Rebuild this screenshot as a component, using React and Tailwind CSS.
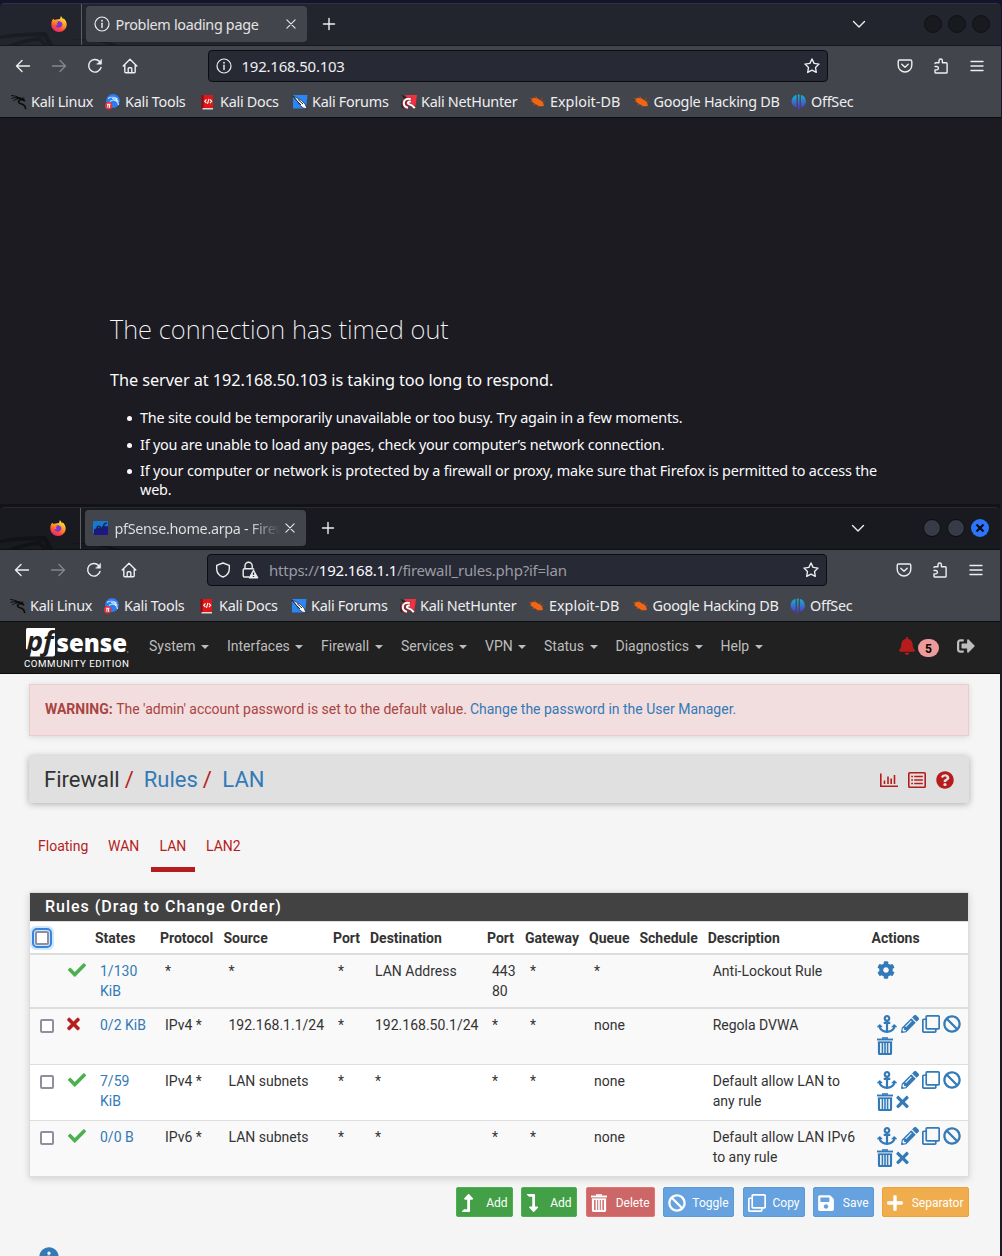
import React from "react";
import { FaAnchor, FaPencilAlt, FaRegClone, FaBan, FaTimes, FaCog, FaCheck, FaBell, FaSignOutAlt, FaLevelUpAlt, FaLevelDownAlt, FaSave, FaPlus, FaQuestionCircle, FaInfoCircle } from "react-icons/fa";

function Firefox() {
  return (
    <svg viewBox="0 0 16 16" className="h-4 w-4 shrink-0">
      <defs>
        <linearGradient id="fx" x1="0.8" y1="0" x2="0.3" y2="1">
          <stop offset="0" stopColor="#fff04a" />
          <stop offset="0.45" stopColor="#ff9a1f" />
          <stop offset="0.75" stopColor="#ff4a3d" />
          <stop offset="1" stopColor="#e3247b" />
        </linearGradient>
      </defs>
      <path d="M1.6 3.6 2.8 2.8 3.2 4l2.3-.4L9 3 9.8.2c1 .7 1.7 1.8 2 2.8l1-.5c1.8 1.6 2.9 3.700 2.900 6C15.700 12.800 12.200 16 8 16S.3 12.700.3 8.500c0-1.900.5-3.600 1.300-4.900z" fill="url(#fx)" />
      <path d="M5 5.700c2.200-1 5-.7 6 1.300 1 2.200-.5 4.800-3.200 4.800C5.700 11.800 4.500 10.300 4.500 9c1 .5 1.600.4 2.300 0-.9-.4-1.300-1.100-1-1.700.4-.6-.2-1-.8-1.600z" fill="#7a35d8" />
      <path d="M3.600 5.300c1.500-.6 2.900 0 4 .9-1.300.2-1.900.8-1.800 1.500-1.200-.3-1.900-1.200-2.200-2.400z" fill="#ff8a16" />
    </svg>
  );
}

const stroke = { fill: "none", stroke: "currentColor", strokeWidth: 1.4, strokeLinecap: "round", strokeLinejoin: "round" };

function Line({ d, className = "", children }) {
  return (
    <svg viewBox="0 0 16 16" className={"h-4 w-4 shrink-0 " + className} {...stroke}>
      {d && <path d={d} />}
      {children}
    </svg>
  );
}

const Back = () => <Line d="M1.500 8h13M7 2.500 1.500 8 7 13.500" />;
const Forward = () => <Line className="text-[#85868b]" d="M1.500 8h13M9 2.500 14.500 8 9 13.500" />;
const Reload = () => (
  <Line d="M14 9.500A6.300 6.300 0 1 1 12.600 3.500">
    <path d="M14.600 1.500v4.700H9.900z" fill="currentColor" strokeWidth="0.500" />
  </Line>
);
const Home = () => (
  <Line className="-ml-px" d="M1.200 8 8 1.300 14.800 8M2.800 6.800v7c0 .6.400 1 1 1h8.400c.6 0 1-.4 1-1v-7">
    <path d="M6.200 14.500v-4c0-.5.300-.8.800-.8h2c.5 0 .8.300.8.800v4" />
  </Line>
);
const Info = () => (
  <Line>
    <circle cx="8" cy="8" r="7" strokeWidth="1.200" />
    <path d="M8 7.300v4.200" />
    <path d="M8 4.600v.2" strokeWidth="1.700" />
  </Line>
);
const Star = () => <Line d="M8 1l2.100 4.400 4.900.7-3.500 3.400.8 4.900L8 12.100l-4.300 2.300.8-4.900L1 6.100l4.900-.7z" />;
const Pocket = () => (
  <Line d="M2.600 2h10.800c.8 0 1.400.6 1.400 1.400v3.800a6.800 6.800 0 0 1-13.600 0V3.400C1.200 2.600 1.800 2 2.600 2z">
    <path d="M4.800 6.300 8 9.300l3.200-3" />
  </Line>
);
const Puzzle = () => (
  <Line d="M2 5.500C2 5 2.300 4.700 2.800 4.700H6V2.700a1.700 1.700 0 0 1 3.400 0v2h3.900c.5 0 .8.300.8.800v8.700c0 .5-.3.800-.8.800H2.800c-.5 0-.8-.3-.8-.8v-2.300h1.700a1.700 1.700 0 0 0 0-3.400H2" />
);
const Menu = () => <Line d="M2 3.500h12M2 8h12M2 12.500h12" />;
const Chevron = () => <Line d="M2.500 5.500 8 11l5.500-5.500" />;
const Plus = () => <Line d="M8 2.500v11M2.500 8h11" />;
const Close = () => <Line className="!h-3 !w-3" d="M2.500 2.500l11 11M13.500 2.500l-11 11" />;

function Dragon() {
  return (
    <svg viewBox="0 0 16 16" className="h-4 w-4 shrink-0" fill="none" stroke="#0c0c0e" strokeLinecap="round">
      <path d="M.5 1.500c3 .2 5.500 1 7.800 2.500M.8 4.300C3 3.600 5 3.500 7 4M2.500 6.800c1.500-1 2.500-1.500 4-1.700" strokeWidth="1" />
      <path d="M6 3.600c3.500.6 6 1.200 8 3.400-2.500-1.500-6-2-6.500.5-.3 2 2.500 2.200 4.500 3 1.600.7 2.400 2 2.600 4" strokeWidth="1.700" />
      <path d="M10 4.500l3-.5" strokeWidth="1" />
    </svg>
  );
}
function Tools() {
  return (
    <svg viewBox="0 0 16 16" className="h-4 w-4 shrink-0">
      <circle cx="8" cy="7" r="6.900" fill="#2b7df0" />
      <path d="M3 4.500c3-2 7-1.500 9.500.5M5 7.500c3.500-3 8-1 8.500 3.500M7 4.500c3 0 5 1 6.500 3" fill="none" stroke="#cfe4ff" strokeWidth="1.100" />
      <circle cx="3.700" cy="11.700" r="3.700" fill="#e5343c" />
      <path d="M2 10.300h3.400M2.900 10.300v3.500M4.600 10.300v3.500" stroke="#fff" fill="none" />
    </svg>
  );
}
function Docs() {
  return (
    <svg viewBox="0 0 16 16" className="h-4 w-4 shrink-0">
      <path d="M1.500 1H13v14H1.500z" fill="#e01717" />
      <path d="M1.500 1h2v14h-2z" fill="#7c1118" />
      <path d="M2.500 14H13v1.500H2.500z" fill="#d8d8dc" />
      <path d="M6.500 5.500 4.700 7.300l1.800 1.800M9.900 5.500l1.800 1.800-1.800 1.800M8.900 4.800 7.500 9.800" stroke="#fff" fill="none" strokeWidth="1.100" />
    </svg>
  );
}
function Forums() {
  return (
    <svg viewBox="0 0 16 16" className="h-4 w-4 shrink-0">
      <path d="M1 1h14.500l-1.500 13.500H1z" fill="#2a86f2" />
      <path d="M0 1.500 5 4l4.500 2.500L13 10l2 4.800-3.500-.8-4-3-2-3.500z" fill="#fff" stroke="#16233c" strokeWidth=".7" />
      <path d="M1 2l4.500 5.500L9 11M6 5.500l5 4.500" stroke="#16233c" fill="none" strokeWidth="1" />
    </svg>
  );
}
function NetHunter() {
  return (
    <svg viewBox="0 0 16 16" className="h-4 w-4 shrink-0">
      <path d="M4 1h12l-1.500 10.500L12.500 13z" fill="#f0313f" />
      <path d="M0 .5l6 3-2.500 1.500zM.5 5v8l2 2" fill="#202024" />
      <path d="M10.500 5C6 3.500 2.500 5.500 2.300 9c0 2.500 2 5 5 5M9.500 8c-2-1-3.500 0-3.300 1.200s2 1.500 3.500 1.800c2 .4 3.500 1.500 4.300 3.200" stroke="#b3202f" strokeWidth="2.800" fill="none" />
      <path d="M9.800 5C5.500 4 2.800 6 2.800 9S4.500 13.300 7 13.700M9.800 7.800C7.500 7 6 8.700 7.500 9.900c2.500.7 4.500 1.700 6.300 4.200" stroke="#fff" strokeWidth="2" fill="none" />
    </svg>
  );
}
function Bug() {
  return (
    <svg viewBox="0 0 16 16" className="h-4 w-4 shrink-0">
      <path d="M0 4.500l5-.5M.5 7.500h4M3 11l3-1M12.500 3.500l-2 3M14.500 7.500l-3 .5M8 13.500l2-2M14 11.500l-2-1M5.500 2l2 3" stroke="#a14d1c" strokeWidth=".9" />
      <path d="M1.500 5.200C3.500 3.500 7 3.700 9.500 5.700c2.900 1 4.500 3.700 4.200 6.200-2.500 1-5.700.3-7.700-1.700-2.500-.5-4.200-2.500-4.500-5z" fill="#f26514" />
    </svg>
  );
}
function OffSec() {
  return (
    <svg viewBox="0 0 16 16" className="h-4 w-4 shrink-0">
      <defs>
        <linearGradient id="os" x1="0" y1="0" x2="0" y2="1">
          <stop offset="0" stopColor="#12b5cf" />
          <stop offset="1" stopColor="#5a2ccb" />
        </linearGradient>
      </defs>
      <path d="M5.600 1v12.600C2.500 13 .6 10.500.6 7.500S2.500 1.600 5.600 1zM9.900 1v12.600c3.100-.6 5-3.100 5-6.100s-1.900-5.900-5-6.500zM6.900.6h1.700v14.800H6.900z" fill="url(#os)" />
    </svg>
  );
}

const bookmarks = [
  ["Kali Linux", Dragon, "w-[94px]"],
  ["Kali Tools", Tools, "w-[95px]"],
  ["Kali Docs", Docs, "w-[92px]"],
  ["Kali Forums", Forums, "w-[109px]"],
  ["Kali NetHunter", NetHunter, "w-[129px]"],
  ["Exploit-DB", Bug, "w-[103.500px] tracking-[0px]"],
  ["Google Hacking DB", Bug, "w-[157.500px]"],
  ["OffSec", OffSec, "w-[80px]"],
];

function Chrome({ active, tabIcon, title, children }) {
  return (
    <div className="w-full text-[#eeeef0]">
      <div className={"relative flex h-[43px] items-center overflow-hidden rounded-t-[5px] border-t border-b pb-[2px] " + (active ? "border-t-[#2a2b31] border-b-[#0f1014] bg-[#191a1f]" : "border-t-[#30333b] border-b-[#15171d] bg-[#23252e]")}>
        <svg className="absolute bottom-0 left-0 h-[15px] w-[140px]" viewBox="0 0 140 15" fill={active ? "#111216" : "#1a1c22"}>
          <path d="M0 6C14 3 30 2 46 2l7 13h-5l-5-8C30 6 12 7 0 9z" />
          <path d="M8 15c10-4 20-7 32-8l8 8h-5l-4-4c-8 0-14 2-21 4zM70 9c22 0 36 1 47 6h-6c-10-3-22-5-41-6z" />
        </svg>
        <div className={"relative " + (active ? "ml-[50px]" : "ml-[51px]")}><Firefox /></div>
        <div className="relative -mb-[2px] ml-[14px] w-px self-stretch bg-[#5b5d64]" />
        <div className="relative ml-[4px] flex h-9 w-[221px] items-center rounded bg-[#43454c] pl-2">
          {tabIcon}
          <div className="ml-[5.500px] mt-[2px] w-[168px] whitespace-nowrap text-[14.400px] tracking-[-0.320px] text-[#e3e3e5]">{title}</div>
          <div className="ml-[1.500px]"><Close /></div>
        </div>
        <div className="relative ml-[14px]"><Plus /></div>
        <div className={"ml-auto h-4 " + (active ? "mr-[57px]" : "mr-[57px]")}><Chevron /></div>
        <div className="mr-[11px] flex gap-[6px]">
          <div className={"h-[18px] w-[18px] rounded-full border " + (active ? "border-[#0b0b0e] bg-[#363b47]" : "border-[#101115] bg-[#191a1f]")} />
          <div className={"h-[18px] w-[18px] rounded-full border " + (active ? "border-[#0b0b0e] bg-[#363b47]" : "border-[#101115] bg-[#191a1f]")} />
          {active ? (
            <div className="flex h-[18px] w-[18px] items-center justify-center rounded-full bg-[#2a75fb]">
              <svg viewBox="0 0 10 10" className="h-[10px] w-[10px]" stroke="#0b0c12" strokeWidth="2.200"><path d="M1.500 1.500l7 7M8.500 1.500l-7 7" /></svg>
            </div>
          ) : (
            <div className="h-[18px] w-[18px] rounded-full border border-[#101115] bg-[#191a1f]" />
          )}
        </div>
      </div>
      <div className={"h-[72px] overflow-hidden border-b border-[#0d0e12] bg-[#43454c] " + (active ? "pl-0" : "pl-px")}>
        <div className="flex h-[40px] items-center pl-[14px]">
          <Back />
          <div className="w-5" /><Forward />
          <div className="w-5" /><Reload />
          <div className="w-5" /><Home />
          <div className="ml-[70px] flex h-8 w-[620px] items-center rounded border border-[#0c0d13] bg-[#272935] px-[7px] text-[15px] tracking-[-0.230px]">
            {children}
            <div className="ml-auto"><Star /></div>
          </div>
          <div className="ml-[69px] flex gap-5"><Pocket /><Puzzle /><Menu /></div>
        </div>
        <div className="flex h-[31px] items-center pl-[10px] pt-px">
          {bookmarks.map(([name, Icon, w]) => (
            <div key={name} className={"flex shrink-0 items-center gap-1 whitespace-nowrap text-[14.400px] " + (name === "Exploit-DB" ? "" : "tracking-[-0.270px] ") + w}>
              <Icon />
              <span>{name}</span>
            </div>
          ))}
        </div>
      </div>
    </div>
  );
}

function Trash({ className }) {
  return (
    <svg viewBox="0 0 16 18" className={className} fill="none" stroke="currentColor">
      <path d="M0 2.500h16" strokeWidth="1.900" />
      <path d="M5 1h6" strokeWidth="1.600" />
      <path d="M2 5v11a1.200 1.200 0 0 0 1.200 1.200h9.600A1.200 1.200 0 0 0 14 16V5" strokeWidth="2.200" />
      <path d="M.9 5.200h14.200" strokeWidth="1.700" />
      <path d="M5.400 5.500v11M8 5.500v11M10.600 5.500v11" strokeWidth="1.600" />
    </svg>
  );
}

function BarChart() {
  return (
    <svg viewBox="0 0 18 16" className="h-4 w-[18px]" fill="none" stroke="currentColor" strokeWidth="1.600">
      <path d="M.8 1.500v12.700H18" />
      <path d="M4.500 8.500V12M8 4.500V12M11.200 6.500V12M14.500 3V12" />
    </svg>
  );
}

function ListAlt() {
  return (
    <svg viewBox="0 0 18 16" className="h-4 w-[18px]" fill="none" stroke="currentColor" strokeWidth="1.600">
      <rect x=".8" y=".8" width="16.400" height="14.400" rx=".8" />
      <path d="M3.200 4.500h1.800M6.200 4.500h8.600M3.200 8h1.800M6.200 8h8.600M3.200 11.500h1.800M6.200 11.500h8.600" />
    </svg>
  );
}

function Box({ focus }) {
  return (
    <div className={"h-[14px] w-[14px] rounded-[2px] border-2 border-[#8f8f9d] bg-white" + (focus ? " outline-2 outline-offset-1 outline-[#3584e4] shadow-[0_0_0_5px_#cfe6fc]" : "")} />
  );
}

const cols = "grid grid-cols-[33px_27px_65px_63.500px_109.500px_37px_117px_38px_64px_50.400px_68.300px_163.800px_1fr]";

function Cell({ children, link }) {
  return <div className={"whitespace-pre pl-[10px] " + (link ? "text-[#337ab7]" : "")}>{children}</div>;
}

function RuleRow({ pass, state, proto, source, dest, desc, one, className }) {
  return (
    <div className={cols + " border-[#dddddd] pt-[6px] " + className}>
      <div className="pl-[10px] pt-[4px]"><Box /></div>
      <div className="pl-[5px]">
        {pass ? <FaCheck className="h-[18px] w-[18px] text-[#4caf50]" /> : <FaTimes className="-ml-px h-[18px] w-[13px] text-[#b71c1c]" stroke="currentColor" strokeWidth="12" />}
      </div>
      <Cell link>{state}</Cell>
      <Cell>{proto}</Cell>
      <Cell>{source}</Cell>
      <Cell>*</Cell>
      <Cell>{dest}</Cell>
      <Cell>*</Cell>
      <Cell>*</Cell>
      <Cell>none</Cell>
      <Cell />
      <Cell>{desc}</Cell>
      <div className="pl-[10.500px] text-[#337ab7]">
        <div className="flex h-[18px] items-center">
          <FaAnchor className="h-[18px] w-[20px]" />
          <FaPencilAlt className="ml-[4px] h-[18px] w-[18px]" />
          <FaRegClone className="ml-[3px] h-[18px] w-[18px]" />
          <FaBan className="ml-[3.500px] h-[18px] w-[18px]" />
        </div>
        <div className="mt-[4px] flex items-center">
          <Trash className="h-[18px] w-[16px]" />
          {!one && <FaTimes className="ml-[3px] h-[18px] w-[13px]" />}
        </div>
      </div>
    </div>
  );
}

function Button({ icon, label, className }) {
  return (
    <div className={"flex h-[30px] items-center justify-between rounded-[2px] border pl-1 pr-[4.500px] text-[12px] text-white " + className}>
      {icon}
      <span className="mt-px">{label}</span>
    </div>
  );
}

const menus = [["System", "w-[78px]"], ["Interfaces", "w-[94px]"], ["Firewall", "w-[80px]"], ["Services", "w-[84px]"], ["VPN", "w-[59px]"], ["Status", "w-[71.500px]"], ["Diagnostics", "w-[105px]"], ["Help", "w-[60px]"]];

const heads = ["", "", "States", "Protocol", "Source", "Port", "Destination", "Port", "Gateway", "Queue", "Schedule", "Description", "Actions"];

function PfSense() {
  return (
    <div className="h-[634px] w-[1000px] overflow-hidden bg-[#f5f5f5] font-['Roboto',sans-serif] text-[14px] leading-5 text-[#333333]">
      <div className="flex h-[52px] items-start border-b border-[#0c0c0c] bg-[#212121] text-[#bdbdbd]">
        <svg viewBox="0 0 110 42" className="ml-[22px] mt-[5px] h-[42px] w-[110px] shrink-0 overflow-visible">
          <path d="M4 2.500a1.500 1.500 0 0 1 1.500-1.500H33v26a2.500 2.500 0 0 1-2.500 2.500H7L9 24 4 22z" fill="#fff" />
          <text x="4.500" y="23.500" fontFamily="Open Sans, sans-serif" fontWeight="700" fontStyle="italic" fontSize="26" textLength="27" lengthAdjust="spacingAndGlyphs" fill="#212121">pf</text>
          <text x="34.500" y="24.800" fontFamily="Open Sans, sans-serif" fontWeight="800" fontSize="25.500" textLength="70.500" lengthAdjust="spacingAndGlyphs" fill="#fff">sense</text>
          <circle cx="105.700" cy="25" r="0.800" fill="#999" />
          <text x="2" y="40.200" fontFamily="Roboto, sans-serif" fontWeight="400" fontSize="9.700" textLength="105" fill="#fff">COMMUNITY EDITION</text>
        </svg>
        <div className="ml-[17px] mt-[14px] flex">
          {menus.map(([name, w]) => (
            <div key={name} className={"flex items-center whitespace-nowrap " + w}>
              {name}
              <span className="ml-[5.500px] mt-[2px] border-x-4 border-t-4 border-x-transparent border-t-[#bdbdbd]" />
            </div>
          ))}
        </div>
        <div className="ml-auto mr-[25px] mt-[13px] flex items-center">
          <FaBell className="h-[18px] w-[16px] text-[#b71c1c]" />
          <span className="ml-[3px] mt-[4px] flex h-[18px] w-[21px] items-center justify-center rounded-full bg-[#ef9a9a] pt-px text-[12px] font-bold text-black">5</span>
          <FaSignOutAlt className="ml-[18px] h-[18px] w-[18px]" />
        </div>
      </div>
      <div className="pl-[29px] pr-[31px] pt-[10px]">
        <div className="flex h-[52px] items-center border border-[#ebccd1] bg-[#f2dede] pb-[2px] pl-[15px] text-[#a94442] shadow-[0_1px_6px_rgba(0,0,0,0.12)]">
          <b>WARNING:</b>&nbsp;The 'admin' account password is set to the default value.&nbsp;<span className="-ml-[0.500px] text-[#337ab7]">Change the password in the User Manager.</span>
        </div>
        <div className="mt-[20px] flex h-[47px] items-center rounded-[2px] bg-[#e0e0e0] pl-[15px] pr-[15px] pt-px shadow-[0_1px_7px_rgba(0,0,0,0.3)]">
          <div className="flex text-[22px]">
            <span>Firewall</span>
            <span className="ml-[5px] text-[#b71c1c]">/</span>
            <span className="ml-[10px] text-[#337ab7]">Rules</span>
            <span className="ml-[5px] text-[#b71c1c]">/</span>
            <span className="ml-[10.500px] text-[#337ab7]">LAN</span>
          </div>
          <div className="ml-auto flex items-center gap-[10px] text-[#b71c1c]">
            <BarChart />
            <ListAlt />
            <FaQuestionCircle className="h-[18px] w-[18px]" />
          </div>
        </div>
        <div className="mt-[33px] flex h-[36px] text-[#b71c1c]">
          <div className="ml-[9px] w-[70px]">Floating</div>
          <div className="w-[43px]">WAN</div>
          <div className="w-[44px] border-b-[5px] border-[#b71c1c] pl-[8.500px]">LAN</div>
          <div className="ml-[11px]">LAN2</div>
        </div>
        <div className="mt-[20px] border border-[#dddddd] shadow-[0_2px_7px_rgba(0,0,0,0.15)]">
          <div className="h-[28px] bg-[#424242] pl-[15px] text-[16px] font-medium leading-[27px] tracking-[1px] text-white">Rules (Drag to Change Order)</div>
          <div className={cols + " h-[34px] border-b-2 border-t border-[#dddddd] bg-white pt-[6px] font-bold"}>
            <div className="pl-[5px] pt-[3px]"><Box focus /></div>
            {heads.slice(1).map((h, i) => <div key={i} className="pl-[5px]">{h}</div>)}
          </div>
          <div className={cols + " h-[54px] border-b-2 border-[#dddddd] bg-[#f9f9f9] pt-[6px]"}>
            <div />
            <div className="pl-[5px]"><FaCheck className="h-[18px] w-[18px] text-[#4caf50]" /></div>
            <Cell link>{"1/130\nKiB"}</Cell>
            <Cell>*</Cell>
            <Cell>*</Cell>
            <Cell>*</Cell>
            <Cell>LAN Address</Cell>
            <Cell>{"443\n80"}</Cell>
            <Cell>*</Cell>
            <Cell>*</Cell>
            <Cell />
            <Cell>Anti-Lockout Rule</Cell>
            <Cell link><FaCog className="ml-[0.500px] h-[18px] w-[18px]" /></Cell>
          </div>
          <RuleRow className="h-14 border-b bg-[#f9f9f9]" state="0/2 KiB" proto="IPv4 *" source="192.168.1.1/24" dest="192.168.50.1/24" desc="Regola DVWA" one />
          <RuleRow className="h-14 border-b bg-white" pass state={"7/59\nKiB"} proto="IPv4 *" source="LAN subnets" dest="*" desc={"Default allow LAN to\nany rule"} />
          <RuleRow className="h-[55px] bg-[#f9f9f9]" pass state="0/0 B" proto="IPv6 *" source="LAN subnets" dest="*" desc={"Default allow LAN IPv6\nto any rule"} />
        </div>
        <div className="mt-[10px] flex justify-end">
          <Button className="w-[57px] border-[#4caf50] bg-[#43a047]" label="Add" icon={<FaLevelUpAlt className="mt-px h-[18px] w-[13px]" />} />
          <Button className="ml-[8px] w-[56px] border-[#4caf50] bg-[#43a047]" label="Add" icon={<FaLevelDownAlt className="mt-px h-[18px] w-[13px]" />} />
          <Button className="ml-[9px] w-[69px] border-[#e57373] bg-[#cd6666]" label="Delete" icon={<Trash className="mt-px h-[18px] w-[16px]" />} />
          <Button className="ml-[8px] w-[71px] border-[#5b9bd5] bg-[#66a2df]" label="Toggle" icon={<FaBan className="mt-px h-[18px] w-[18px]" />} />
          <Button className="ml-[9px] w-[62px] border-[#5b9bd5] bg-[#66a2df]" label="Copy" icon={<FaRegClone className="mt-px h-[18px] w-[18px]" />} />
          <Button className="ml-[8px] w-[61px] border-[#5b9bd5] bg-[#66a2df]" label="Save" icon={<FaSave className="mt-px h-[18px] w-[16px]" />} />
          <Button className="ml-[8px] w-[87px] border-[#eea236] bg-[#f0ad4e]" label="Separator" icon={<FaPlus className="mt-px h-[18px] w-[16px]" />} />
        </div>
        <FaInfoCircle className="ml-[10px] mt-[30px] h-[20px] w-[20px] text-[#337ab7]" />
      </div>
    </div>
  );
}

function Tip({ children, className = "" }) {
  return (
    <li className={"flex whitespace-nowrap " + className}>
      <span className="mr-[8px] mt-[8px] h-[5px] w-[5px] shrink-0 rounded-full bg-[#fbfbfe]" />
      <span>{children}</span>
    </li>
  );
}

export default function App() {
  return (
    <div className="h-[1256px] w-[1002px] overflow-hidden bg-[#1c1b22] font-['Noto_Sans',sans-serif]">
      <div className="bg-[#14142e] pt-[3px]">
        <div className="w-[1001px]">
          <Chrome title="Problem loading page" tabIcon={<Info />}>
            <Info />
            <span className="ml-[9.500px]">192.168.50.103</span>
          </Chrome>
        </div>
      </div>
      <div className="h-[386px] w-[1001px] bg-[#1c1b22] pl-[110px] pt-[194px] text-[#fbfbfe]">
        <h1 className="whitespace-nowrap text-[25.600px] font-extralight leading-[36px]">The connection has timed out</h1>
        <p className="mt-[20px] whitespace-nowrap text-[16.300px] leading-[24px] tracking-[-0.080px]">The server at 192.168.50.103 is taking too long to respond.</p>
        <ul className="mt-[16px] pl-[17px] text-[14.400px] leading-[19px] tracking-[-0.160px]">
          <Tip>The site could be temporarily unavailable or too busy. Try again in a few moments.</Tip>
          <Tip className="mt-[8px] tracking-[-0.2px]">If you are unable to load any pages, check your computer’s network connection.</Tip>
          <Tip className="mt-[7px]">If your computer or network is protected by a firewall or proxy, make sure that Firefox is permitted to access the<br />web.</Tip>
        </ul>
      </div>
      <div className="w-[1001px] border-r border-[#1a1a28] bg-[#121217] pt-[3px]">
        <Chrome
          active
          title={<span className="inline-block w-[167px] bg-linear-to-r from-[#e3e3e5] from-80% to-transparent to-99% bg-clip-text text-transparent">pfSense.home.arpa - Firew</span>}
          tabIcon={
            <svg viewBox="0 0 16 16" className="h-4 w-4 shrink-0">
              <path d="M0 2a1 1 0 0 1 1-1h14v8l-15 4z" fill="#1878d0" />
              <path d="M1 9l14-3v8a1 1 0 0 1-1 1H1z" fill="#20158a" />
              <path d="M2.500 13.500 4.500 6.500h2c1.500 0 1.500 3.500-2.500 3.500M9 13l2-8.500c.4-1 1.500-1.500 2.800-1.200M8.800 7h4" fill="none" stroke="#14235c" strokeWidth="1.500" />
            </svg>
          }
        >
          <Line d="M8 1l6.300 2.300v3.400c0 3.900-2.500 7-6.300 8.300-3.800-1.300-6.300-4.400-6.300-8.300V3.300z" />
          <svg viewBox="0 0 18 18" className="ml-[10px] h-[18px] w-[18px] shrink-0" fill="none" stroke="currentColor" strokeWidth="1.400">
            <path d="M8 16H3.500c-.8 0-1.300-.5-1.300-1.300V9c0-.8.500-1.300 1.300-1.300h8.200c.7 0 1.200.4 1.300 1M4 7.500V4.800a3.600 3.600 0 0 1 7.200 0v2.700" />
            <path d="M12.500 9l4.500 8H8z" fill="currentColor" strokeWidth="1" />
            <path d="M12.500 11.500v2.500M12.500 15v1" stroke="#272935" strokeWidth="1.300" />
          </svg>
          <span className="ml-[10px] whitespace-nowrap text-[#9a9ba3]">https://<span className="text-[#fbfbfe]">192.168.1.1</span>/firewall_rules.php?if=lan</span>
        </Chrome>
        <PfSense />
      </div>
    </div>
  );
}
